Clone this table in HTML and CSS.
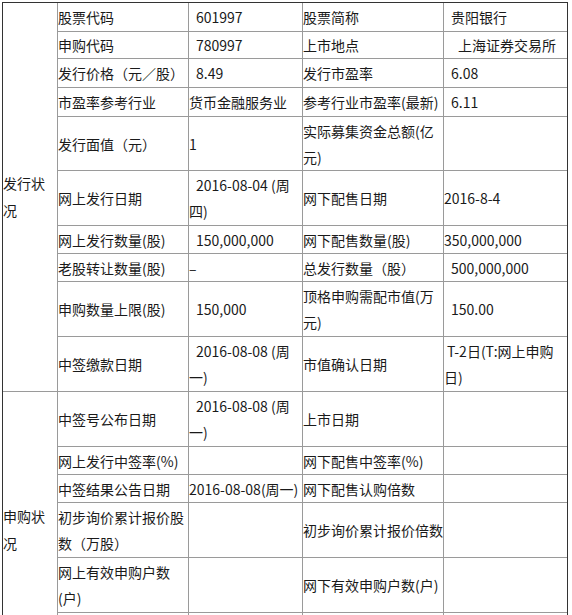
FILE: index.html
```html
<!DOCTYPE html>
<html lang="zh-CN">
<head>
<meta charset="utf-8">
<title>贵阳银行 新股发行</title>
<link rel="stylesheet" href="styles.css">
</head>
<body>
<div class="wrap">
<table class="ipo">
<colgroup>
<col class="c0"><col class="c1"><col class="c2"><col class="c3"><col class="c4">
</colgroup>
<tbody>
<tr class="r29">
<td class="sec" rowspan="10">发行状<br>况</td>
<td>股票代码</td><td class="ind">601997</td><td>股票简称</td><td class="ind">贵阳银行</td>
</tr>
<tr class="r27">
<td>申购代码</td><td class="ind">780997</td><td>上市地点</td><td class="ind2">上海证券交易所</td>
</tr>
<tr class="r29">
<td>发行价格（元／股）</td><td class="ind">8.49</td><td>发行市盈率</td><td class="ind">6.08</td>
</tr>
<tr class="r29">
<td>市盈率参考行业</td><td>货币金融服务业</td><td>参考行业市盈率(最新)</td><td class="ind">6.11</td>
</tr>
<tr class="r54">
<td>发行面值（元）</td><td>1</td><td>实际募集资金总额(亿<br>元)</td><td></td>
</tr>
<tr class="r55">
<td>网上发行日期</td><td class="ind">2016-08-04 (周<br>四)</td><td>网下配售日期</td><td>2016-8-4</td>
</tr>
<tr class="r28">
<td>网上发行数量(股)</td><td class="ind">150,000,000</td><td>网下配售数量(股)</td><td>350,000,000</td>
</tr>
<tr class="r28">
<td>老股转让数量(股)</td><td>–</td><td>总发行数量（股）</td><td class="ind">500,000,000</td>
</tr>
<tr class="r55">
<td>申购数量上限(股)</td><td class="ind">150,000</td><td>顶格申购需配市值(万<br>元)</td><td class="ind">150.00</td>
</tr>
<tr class="r55">
<td>中签缴款日期</td><td class="ind">2016-08-08 (周<br>一)</td><td>市值确认日期</td><td class="ind1">T-2日(T:网上申购<br>日)</td>
</tr>
<tr class="r55">
<td class="sec" rowspan="6">申购状<br>况</td>
<td>中签号公布日期</td><td class="ind">2016-08-08 (周<br>一)</td><td>上市日期</td><td></td>
</tr>
<tr class="r28">
<td>网上发行中签率(%)</td><td></td><td>网下配售中签率(%)</td><td></td>
</tr>
<tr class="r28">
<td>中签结果公告日期</td><td>2016-08-08(周一)</td><td>网下配售认购倍数</td><td></td>
</tr>
<tr class="r55">
<td>初步询价累计报价股<br>数（万股）</td><td></td><td>初步询价累计报价倍数</td><td></td>
</tr>
<tr class="r55">
<td>网上有效申购户数<br>(户)</td><td></td><td>网下有效申购户数(户)</td><td></td>
</tr>
<tr class="r55">
<td></td><td></td><td></td><td></td>
</tr>
</tbody>
</table>
</div>
</body>
</html>
```
FILE: styles.css
```css
html, body {
  margin: 0;
  padding: 0;
  background: #fff;
}

body {
  font-family: "Noto Sans CJK SC", "Noto Sans", sans-serif;
  font-size: 14px;
  color: #1a1a1a;
}

.wrap {
  margin: 2px 0 0 2px;
  width: 564px;
  border: 1px solid #333;
}

.ipo {
  width: 564px;
  border-collapse: separate;
  border-spacing: 0;
  table-layout: fixed;
}

.c0 { width: 55px; }
.c1 { width: 131px; }
.c2 { width: 114px; }
.c3 { width: 141px; }
.c4 { width: 123px; }

.ipo td {
  box-sizing: border-box;
  padding: 0;
  line-height: 26px;
  white-space: nowrap;
  overflow: hidden;
  vertical-align: middle;
  text-align: left;
  border-right: 1px solid #9a9a9a;
  border-bottom: 1px solid #9a9a9a;
}

.ipo td:last-child {
  border-right: none;
}

.ipo .sec {
  line-height: 27px;
}

.ind { text-indent: 7px; }
.ind1 { text-indent: 3px; }
.ind2 { text-indent: 14px; }

.r27 td { height: 27px; }
.r28 td { height: 28px; }
.r29 td { height: 29px; }
.r54 td { height: 54px; }
.r55 td { height: 55px; }
.ipo .sec { height: auto; }
```
